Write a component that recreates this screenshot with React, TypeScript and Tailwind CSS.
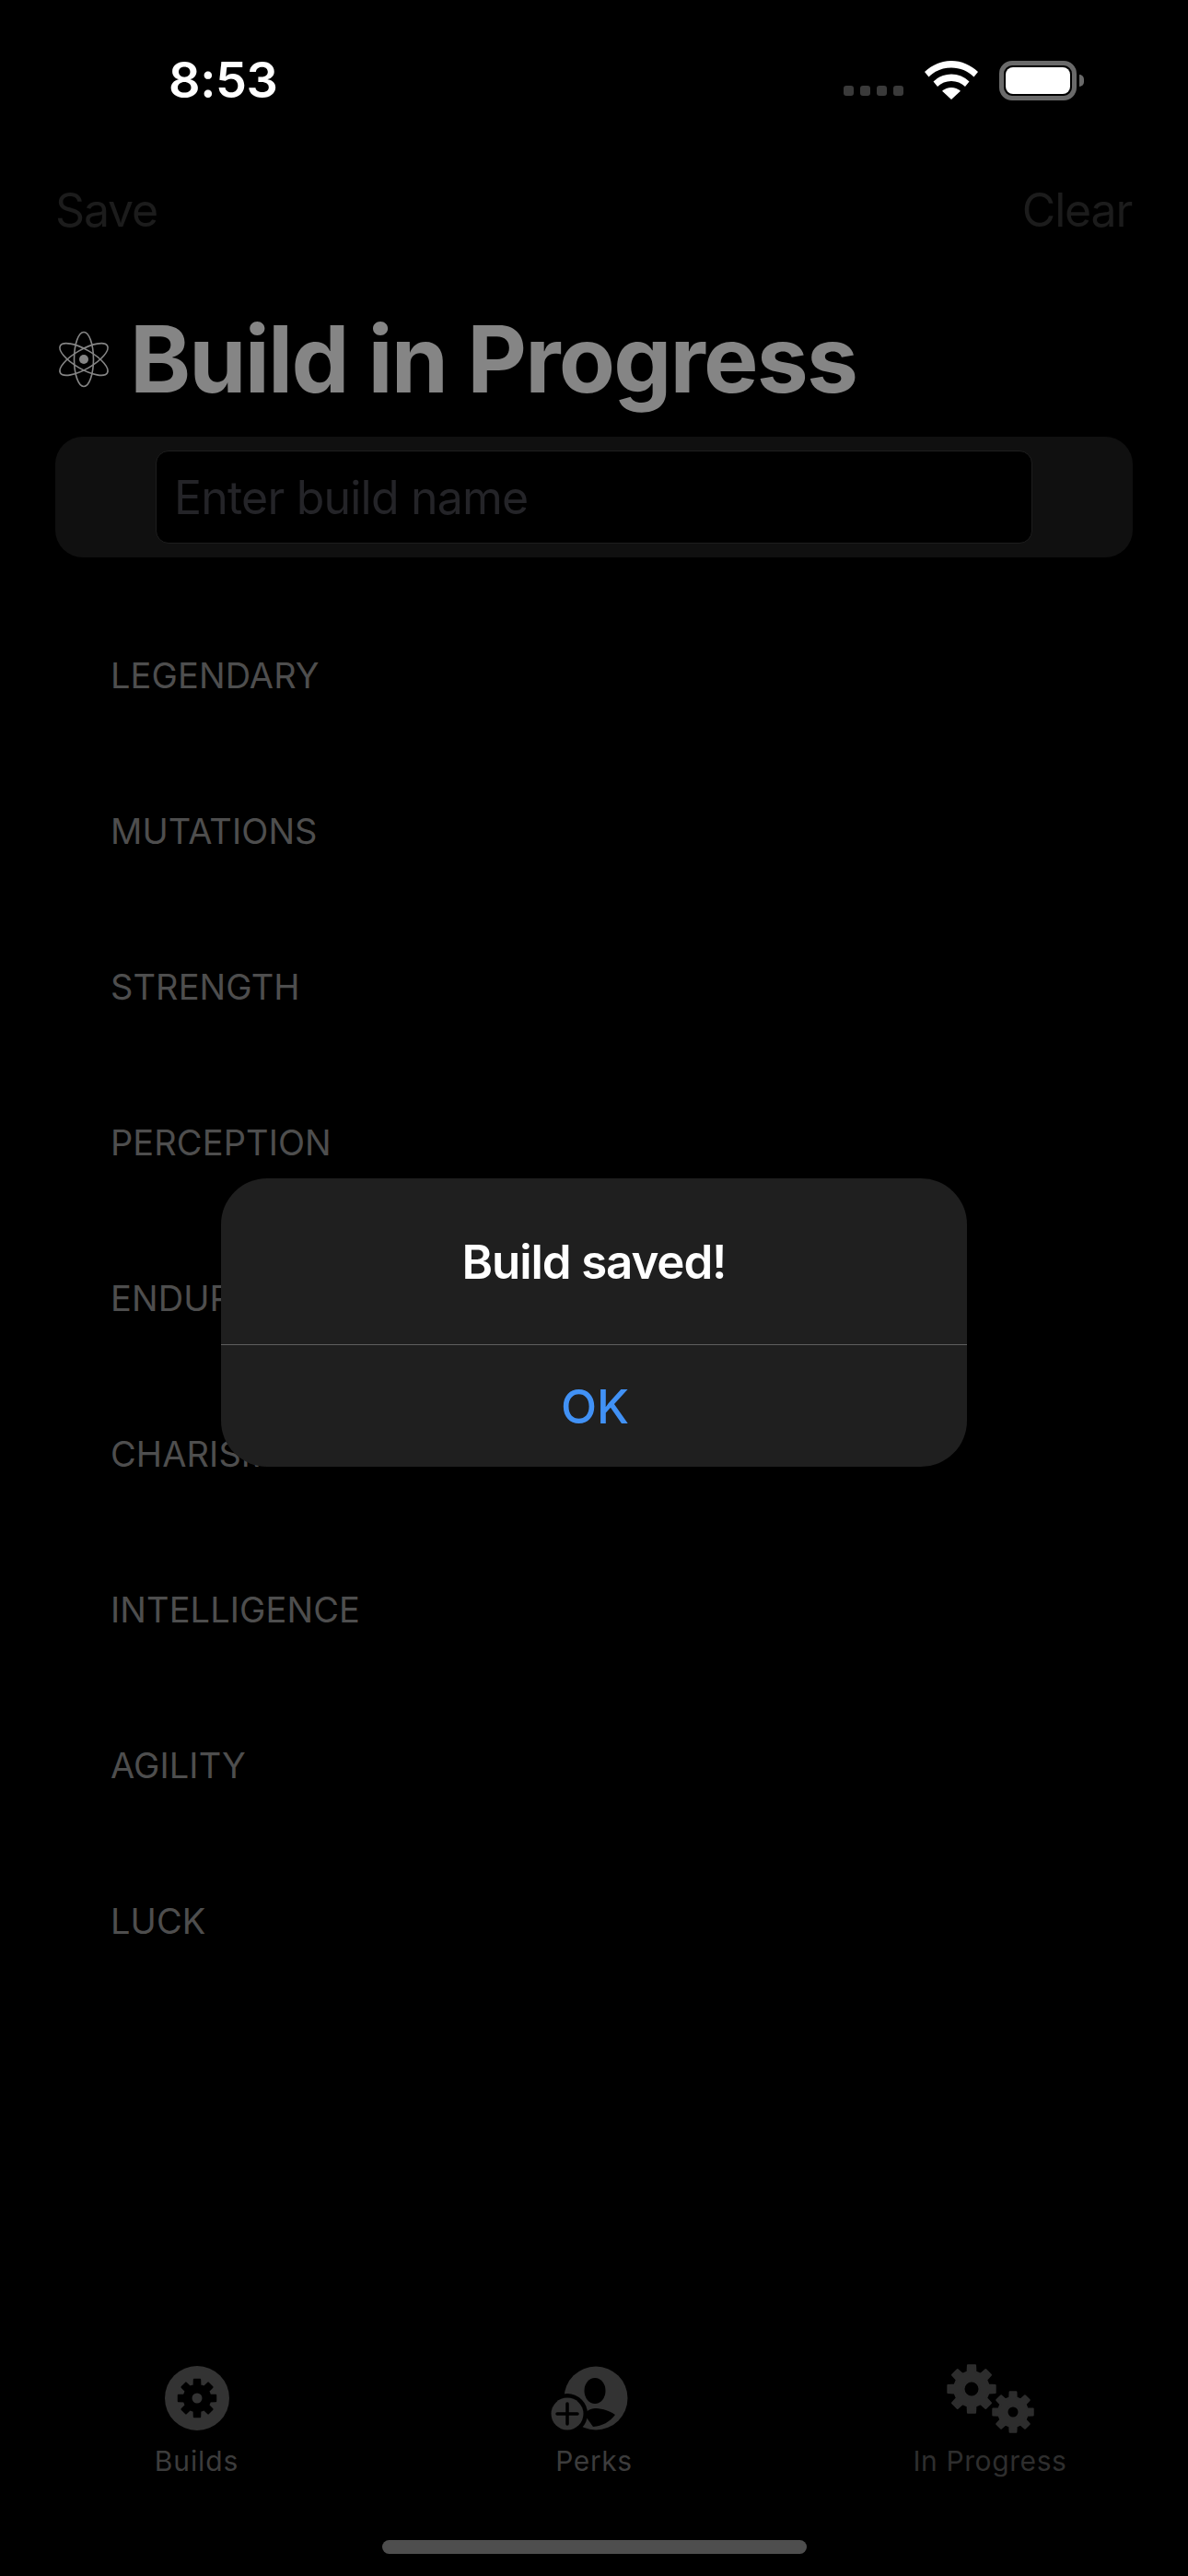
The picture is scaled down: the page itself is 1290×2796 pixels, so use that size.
import React from "react"

const sections = ["LEGENDARY", "MUTATIONS", "STRENGTH", "PERCEPTION", "ENDURANCE", "CHARISMA", "INTELLIGENCE", "AGILITY", "LUCK"]

// builds a cog outline around cx,cy
function gearPath(cx: number, cy: number, outer: number, inner: number, hole: number, teeth = 8) {
  const step = (Math.PI * 2) / teeth
  const pts: string[] = []
  for (let i = 0; i < teeth; i++) {
    const a = i * step - Math.PI / 2
    const w = step * 0.2
    const b = step * 0.3
    const list: [number, number][] = [
      [inner, a - b],
      [outer, a - w],
      [outer, a + w],
      [inner, a + b],
    ]
    list.forEach(([r, t]) => pts.push(`${(cx + r * Math.cos(t)).toFixed(2)} ${(cy + r * Math.sin(t)).toFixed(2)}`))
  }
  const circle = `M${cx - hole} ${cy}a${hole} ${hole} 0 1 0 ${hole * 2} 0a${hole} ${hole} 0 1 0 ${-hole * 2} 0z`
  return `M${pts.join("L")}z${circle}`
}

function StatusIcons() {
  return (
    <div className="flex items-center">
      <div className="mt-[22px] flex gap-[7px]">
        <div className="h-[11px] w-[11px] rounded-[3px] bg-[#3a3a3a]" />
        <div className="h-[11px] w-[11px] rounded-[3px] bg-[#3a3a3a]" />
        <div className="h-[11px] w-[11px] rounded-[3px] bg-[#3a3a3a]" />
        <div className="h-[11px] w-[11px] rounded-[3px] bg-[#3a3a3a]" />
      </div>
      <svg className="ml-[23px]" width="58" height="42" viewBox="0 0 58 42" fill="#fff">
        <path d="M29 0C18 0 8 4.5 0 12l4.5 5.5C11 11 19.500 7.500 29 7.500S47 11 53.500 17.500L58 12C50 4.500 40 0 29 0z" />
        <path d="M29 14.500c-7.500 0-14 2.800-19.500 8l4.500 5.500c4-3.700 9.300-6 15-6s11 2.300 15 6l4.500-5.500c-5.500-5.200-12-8-19.500-8z" />
        <path d="M29 29c-3.800 0-7.200 1.400-10 3.800L29 42l10-9.200C36.200 30.400 32.800 29 29 29z" />
      </svg>
      <div className="ml-[23px] flex items-center">
        <div className="h-[43px] w-[84px] rounded-[14px] border-[5px] border-[#6a6a6a] p-[2px]">
          <div className="h-full w-full rounded-[8px] bg-white" />
        </div>
        <div className="ml-[3px] h-[13px] w-[5px] rounded-r-full bg-[#6a6a6a]" />
      </div>
    </div>
  )
}

function AtomIcon() {
  return (
    <svg width="62" height="62" viewBox="0 0 62 62" fill="none" stroke="#858585" strokeWidth="1.600">
      <ellipse cx="31" cy="31" rx="10.500" ry="29.500" />
      <ellipse cx="31" cy="31" rx="10.500" ry="29.500" transform="rotate(60 31 31)" />
      <ellipse cx="31" cy="31" rx="10.500" ry="29.500" transform="rotate(-60 31 31)" />
      <circle cx="31" cy="31" r="5" fill="#858585" stroke="none" />
    </svg>
  )
}

function BuildsIcon() {
  return (
    <svg width="70" height="70" viewBox="0 0 70 70">
      <circle cx="35" cy="35" r="35" fill="#333" />
      <path d={gearPath(35, 35, 20.500, 14.500, 6.500)} fill="#000" fillRule="evenodd" stroke="#000" strokeWidth="2" strokeLinejoin="round" />
    </svg>
  )
}

function PerksIcon() {
  return (
    <svg width="84" height="70" viewBox="0 0 84 70">
      <circle cx="49" cy="35" r="34.500" fill="#333" />
      <ellipse cx="48" cy="27" rx="11.500" ry="14" fill="#000" />
      <path d="M36 52c4-4 8-6 12-6s14 1 22 7c-6 8-14 12-24 13z" fill="#000" />
      <circle cx="18" cy="52" r="22" fill="#000" />
      <circle cx="18" cy="52" r="17.500" fill="#333" />
      <path d="M18 41v22M7 52h22" stroke="#000" strokeWidth="3.500" strokeLinecap="round" />
    </svg>
  )
}

function GearsIcon() {
  return (
    <svg width="96" height="76" viewBox="0 0 96 76" fill="#2d2d2d" fillRule="evenodd">
      <path d={gearPath(28, 28, 26, 19, 8.500)} stroke="#2d2d2d" strokeWidth="2" strokeLinejoin="round" />
      <path d={gearPath(73, 53, 22, 16, 6.500)} stroke="#2d2d2d" strokeWidth="2" strokeLinejoin="round" />
    </svg>
  )
}

export default function App() {
  return (
    <div className="relative flex h-[2796px] w-[1290px] flex-col overflow-hidden bg-black [font-family:Inter,sans-serif]">
      {/* Status bar */}
      <div className="flex h-[174px] shrink-0 items-center justify-between pl-[183px] pr-[113px]">
        <span className="text-[54px] font-semibold leading-none tracking-[-0.4px] text-white">8:53</span>
        <StatusIcons />
      </div>

      {/* Top actions */}
      <div className="flex h-[108px] shrink-0 items-center justify-between pl-[60px] pr-[61px] text-[50px] leading-none tracking-[-1.200px] text-[#1c1c1c]">
        <span>Save</span>
        <span>Clear</span>
      </div>

      {/* Title */}
      <div className="flex h-[192px] shrink-0 items-center gap-[19px] pl-[60px] pt-[23px]">
        <AtomIcon />
        <h1 className="text-[100px] font-bold leading-none tracking-[-1.800px] text-[#858585]">Build in Progress</h1>
      </div>

      {/* Name field */}
      <div className="mx-[60px] shrink-0 rounded-[30px] bg-[#101010] px-[109px] py-[15px]">
        <div className="flex h-[101px] items-center rounded-[14px] border border-[#1e1e1e] bg-black pl-[19px] text-[50px] leading-none tracking-[-0.800px] text-[#242428]">
          Enter build name
        </div>
      </div>

      {/* Perk sections */}
      <div className="mt-[43px] flex flex-col">
        {sections.map((name) => (
          <div key={name} className="flex h-[169px] items-center pl-[120px] text-[38px] leading-none tracking-[0.1px] text-[#4e4e4e]">
            {name}
          </div>
        ))}
      </div>

      {/* Tab bar */}
      <div className="mt-auto grid h-[189px] grid-cols-3">
        <div className="flex flex-col items-center pr-[3px]">
          <div className="flex h-[70px] items-center"><BuildsIcon /></div>
          <span className="mt-[15px] text-[30px] leading-[36px] tracking-[0.9px] text-[#3c3c3c]">Builds</span>
        </div>
        <div className="flex flex-col items-center">
          <div className="-ml-[10px] flex h-[70px] items-center"><PerksIcon /></div>
          <span className="mt-[15px] text-[30px] leading-[36px] tracking-[0.6px] text-[#3c3c3c]">Perks</span>
        </div>
        <div className="flex flex-col items-center">
          <div className="flex h-[70px] items-center"><GearsIcon /></div>
          <span className="mt-[15px] text-[30px] leading-[36px] tracking-[0.6px] text-[#2e2e2e]">In Progress</span>
        </div>
      </div>
      <div className="mx-auto mb-[24px] h-[15px] w-[461px] shrink-0 rounded-full bg-[#4e4e4e]" />

      {/* Alert */}
      <div className="absolute left-[240px] top-[1279px] flex h-[313px] w-[810px] flex-col rounded-[50px] bg-[#1f1f1f]">
        <div className="flex h-[181px] items-center justify-center border-b border-[#5e5e5e] text-[51px] font-semibold leading-none tracking-[-1.100px] text-white">
          Build saved!
        </div>
        <div className="flex flex-1 items-center justify-center pl-[2px] text-[51px] font-medium leading-none text-[#4191f5]">
          OK
        </div>
      </div>
    </div>
  )
}
